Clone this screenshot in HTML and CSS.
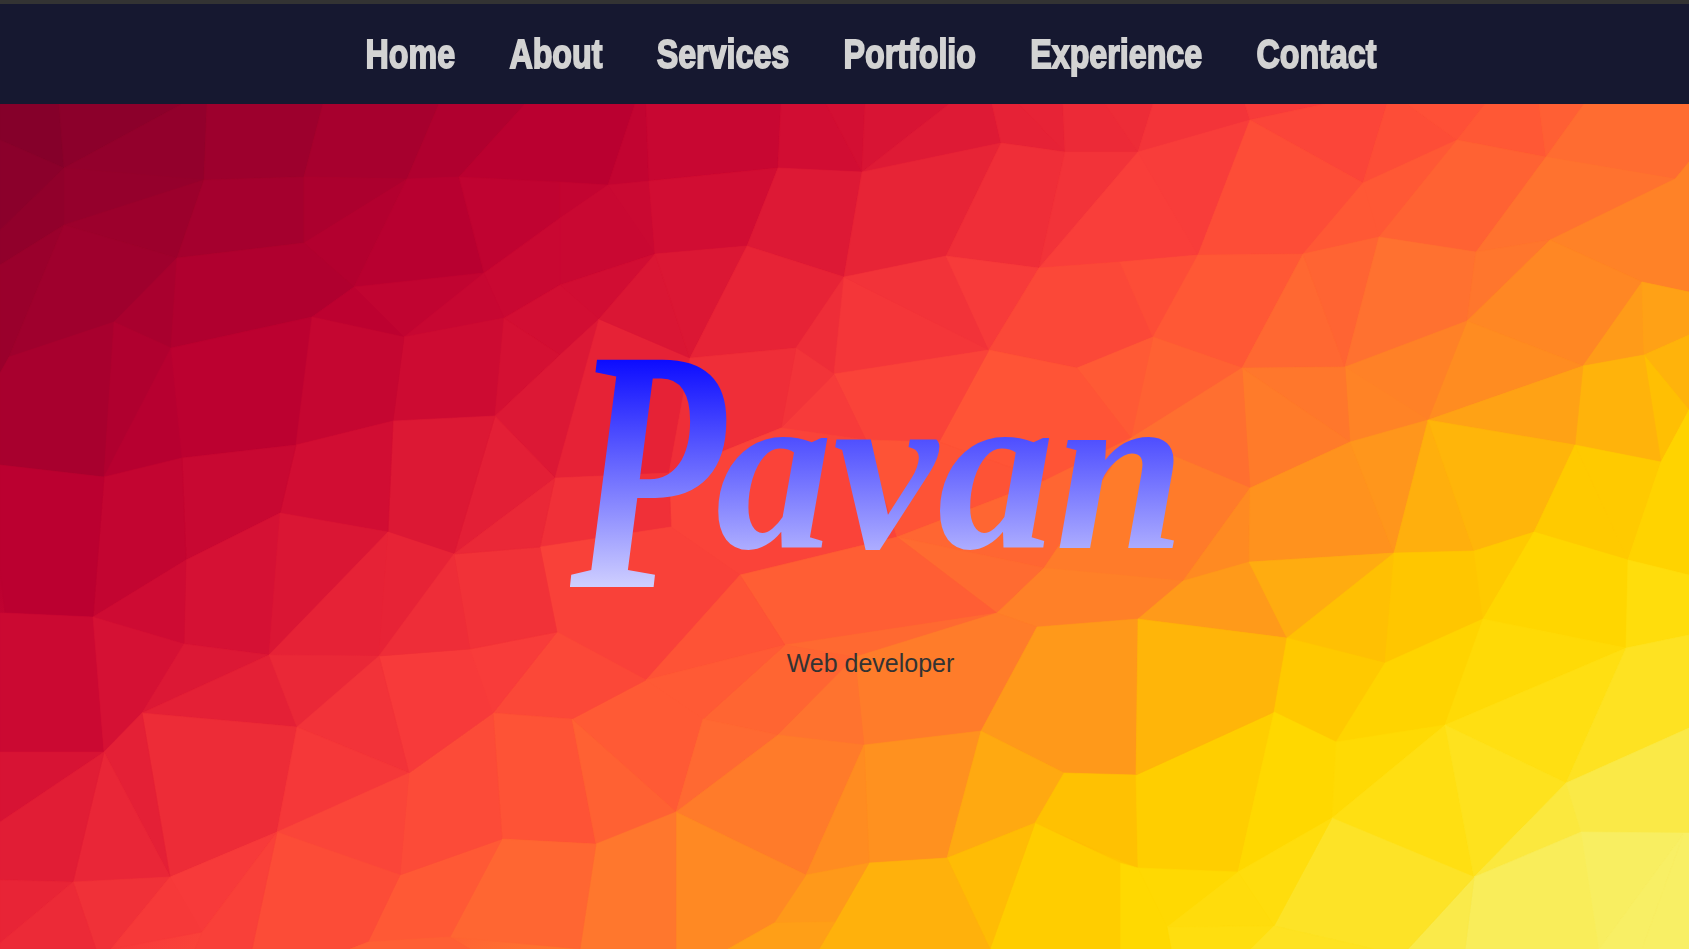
FILE: index.html
```html
<!DOCTYPE html>
<html lang="en">
<head>
    <meta charset="UTF-8">
    <meta name="viewport" content="width=device-width, initial-scale=1.0">
    <title>Pavan</title>
    <link rel="stylesheet" href="styles.css">
</head>
<body>
<header>
    <nav>
        <ul>
            <li><a href="#home">Home</a></li>
            <li><a href="#about">About</a></li>
            <li><a href="#services">Services</a></li>
            <li><a href="#portfolio">Portfolio</a></li>
            <li><a href="#experience">Experience</a></li>
            <li><a href="#contact">Contact</a></li>
        </ul>
    </nav>
</header>

<section class="hero" id="home">
    <svg class="mesh" id="mesh" viewBox="0 104 1689 845" preserveAspectRatio="none" aria-hidden="true"></svg>
    <h1 class="name"><span class="name-cap">P</span><span class="name-rest">avan</span></h1>
    <p class="role">Web developer</p>
</section>

<script src="script.js"></script>
</body>
</html>
```

FILE: styles.css
```css
body {
    font-family: 'Liberation Sans', Arial, sans-serif;
    margin: 0;
    padding: 0;
    height: 949px;
    overflow: hidden;
    background-color: #161830;
}

header {
    background-color: #161830;
    border-top: 4px solid #333;
    height: 100px;
    box-sizing: content-box;
    padding-left: 52px;
    display: flex;
    align-items: center;
    justify-content: center;
}

nav ul {
    list-style-type: none;
    margin: 0;
    padding: 0;
    display: flex;
    gap: 69px;
    transform: scaleX(0.786);
}

nav ul li a {
    font-family: Impact, 'Liberation Sans', sans-serif;
    font-weight: bold;
    font-size: 41px;
    line-height: 1;
    color: lightgray;
    text-decoration: none;
    -webkit-text-stroke: 1.8px lightgray;
}

.hero {
    position: relative;
    height: 845px;
    box-sizing: border-box;
    padding: 193px 0 0 52px;
    display: flex;
    flex-direction: column;
    align-items: center;
    background: linear-gradient(142deg, #7d0029 0%, #a0002d 12%, #bb0030 22%, #d10d33 30%, #e72336 37%, #f83c3a 44%, #ff5536 52%, #ff7030 58%, #ff8f20 66%, #ffab10 70%, #ffc400 75%, #ffd800 80%, #ffe015 87%, #f8ee60 100%);
}

.mesh {
    position: absolute;
    top: 0;
    left: 0;
    width: 100%;
    height: 100%;
}

.name {
    position: relative;
    margin: 0 0 0 38px;
    display: flex;
    align-items: flex-start;
    font-family: 'Liberation Serif', 'Times New Roman', serif;
    font-style: italic;
    font-weight: bold;
    line-height: 1;
}

.name-cap,
.name-rest {
    padding-right: 24px;
    -webkit-background-clip: text;
    background-clip: text;
    color: transparent;
}

.name-cap {
    font-size: 347px;
    margin-right: -90px;
    transform: scaleX(0.73);
    transform-origin: left top;
    background-image: linear-gradient(#0000ff 14%, #dcdcff 88%);
}

.name-rest {
    font-size: 235px;
    margin-top: 55px;
    background-image: linear-gradient(#0000ff -3%, #dcdcff 108%);
}

.role {
    position: relative;
    margin: 5px 0 0;
    font-size: 25px;
    line-height: 29px;
    color: #333;
}
```

FILE: script.js
```js
// colour ramp along the diagonal of the background
var stops = [
    [0, 120, 0, 40], [83, 125, 0, 41], [300, 160, 0, 45], [460, 187, 0, 48], [600, 209, 13, 51],
    [720, 231, 35, 54], [850, 248, 60, 58], [980, 255, 85, 54], [1100, 255, 112, 48],
    [1230, 255, 143, 32], [1300, 255, 171, 16], [1380, 255, 196, 0], [1480, 255, 216, 0],
    [1600, 255, 224, 21], [1760, 248, 238, 96], [1950, 248, 240, 110]
];

// facets, each one a flat list of x,y points
var faces = [
    [0,104,59,104,64,168,0,140], [59,104,182,104,64,168], [182,104,207,104,204,180,64,168],
    [207,104,323,104,304,177,204,180], [323,104,439,104,407,179,304,177], [439,104,525,104,459,177,407,179],
    [525,104,635,104,608,185,459,177], [635,104,646,104,649,181,608,185], [646,104,781,104,778,168,649,181],
    [781,104,826,104,862,172,778,168], [826,104,865,104,862,172], [865,104,949,104,862,172],
    [949,104,992,104,1001,143,862,172], [992,104,1019,104,1065,152,1001,143], [1019,104,1063,104,1065,152],
    [1063,104,1105,104,1138,152,1065,152], [1105,104,1153,104,1138,152], [1153,104,1245,104,1250,120,1138,152],
    [1245,104,1325,104,1250,120], [1325,104,1387,104,1363,183,1250,120], [1387,104,1407,104,1457,140,1363,183],
    [1407,104,1485,104,1457,140], [1485,104,1539,104,1546,157,1457,140], [1539,104,1584,104,1546,157],
    [1584,104,1689,104,1689,162,1675,179,1546,157],

    [0,140,64,168,0,230], [64,168,64,225,0,265,0,230], [64,168,204,180,64,225], [64,225,204,180,177,258],
    [204,180,304,177,304,243,177,258], [304,177,407,179,304,243], [304,243,407,179,354,287],
    [407,179,459,177,484,273,354,287], [459,177,560,182,560,220,484,273], [560,182,608,185,560,218],
    [608,185,649,181,655,254], [608,185,655,254,560,285,560,218], [484,273,560,218,560,285,504,318],
    [560,285,655,254,599,319], [504,318,560,285,599,319,560,355],
    [649,181,778,168,747,246,655,254], [778,168,862,172,844,277,747,246], [862,172,1001,143,946,256,844,277],
    [1001,143,1065,152,1039,268,946,256], [1065,152,1138,152,1120,173,1039,268],
    [1120,173,1138,152,1198,255,1120,262,1039,268], [1138,152,1250,120,1198,255],
    [1250,120,1363,183,1303,254,1198,255], [1363,183,1379,237,1303,254], [1363,183,1457,140,1379,237],
    [1457,140,1546,157,1476,252,1379,237], [1546,157,1675,179,1550,240,1476,252],
    [1675,179,1689,162,1689,292,1642,282,1550,240],

    [0,265,64,225,9,357,0,373], [64,225,177,258,114,322,9,357], [177,258,171,348,114,322],
    [177,258,304,243,354,287,312,317,171,348], [354,287,484,273,404,337], [354,287,404,337,312,317],
    [484,273,504,318,404,337], [404,337,504,318,495,416,393,421], [504,318,560,355,495,416],
    [9,357,114,322,104,477,0,465,0,373], [114,322,171,348,104,477], [171,348,182,458,104,477],
    [171,348,312,317,296,445,182,458], [312,317,404,337,393,421,296,445],
    [495,416,560,355,599,319,555,478], [599,319,690,358,669,473,555,478], [599,319,655,254,690,358],
    [655,254,747,246,690,358], [747,246,844,277,796,348,690,358], [844,277,834,374,796,348],
    [844,277,989,350,834,374], [844,277,946,256,989,350], [946,256,1039,268,989,350],
    [1039,268,1120,262,1153,337,1077,368,989,350], [1120,262,1198,255,1153,337],
    [1198,255,1303,254,1242,368,1153,337], [1303,254,1345,367,1242,368], [1303,254,1379,237,1345,367],
    [1379,237,1476,252,1467,321,1345,367], [1476,252,1550,240,1467,321], [1550,240,1642,282,1583,366,1467,321],
    [1642,282,1644,355,1583,366], [1642,282,1689,292,1689,335,1644,355], [1644,355,1689,335,1689,410],
    [1644,355,1689,410,1661,462], [1583,366,1644,355,1661,462,1575,445], [1467,321,1583,366,1428,420],
    [1583,366,1575,445,1428,420], [1345,367,1467,321,1428,420], [1345,367,1428,420,1350,442],
    [1242,368,1345,367,1350,442], [1153,337,1242,368,1131,438], [1242,368,1350,442,1250,488],
    [1242,368,1250,488,1131,438], [1077,368,1153,337,1131,438],

    [989,350,1077,368,1131,438,1046,480,939,442], [834,374,989,350,939,442,866,440], [834,374,866,440,781,428],
    [796,348,834,374,781,428], [690,358,796,348,781,428,669,473], [669,473,781,428,866,440,897,537,740,575,671,527],
    [555,478,669,473,671,527,540,547], [540,547,671,527,740,575,646,680,556,633],
    [866,440,939,442,1046,480,897,537], [897,537,1046,480,1131,438,1044,568], [897,537,1044,568,997,613],
    [897,537,997,613,785,645,740,575], [740,575,785,645,646,680], [1131,438,1250,488,1183,581,1044,568],
    [1250,488,1249,562,1183,581], [1250,488,1350,442,1394,553,1249,562], [1350,442,1428,420,1394,553],
    [1428,420,1474,551,1394,553], [1428,420,1575,445,1534,532,1474,551], [1575,445,1628,560,1534,532],
    [1575,445,1661,462,1628,560], [1661,462,1689,410,1689,575,1628,560],
    [1044,568,1183,581,1138,619,1037,627,997,613], [1183,581,1249,562,1287,638,1138,619],
    [1249,562,1394,553,1287,638], [1394,553,1385,663,1287,638], [1394,553,1474,551,1483,619,1385,663],
    [1474,551,1534,532,1483,619], [1534,532,1628,560,1626,648,1483,619], [1628,560,1689,575,1689,635,1626,648],

    [785,645,997,613,855,657], [855,657,997,613,1037,627,981,731,864,745], [785,645,855,657,778,735,703,719],
    [855,657,864,745,778,735], [1037,627,1138,619,1136,775,1064,773,981,731], [646,680,785,645,703,719],
    [572,719,646,680,703,719,676,812], [557,632,646,680,572,719,493,713], [493,713,572,719,596,844,502,839],
    [572,719,676,812,596,844], [703,719,778,735,676,812], [778,735,864,745,806,875,676,812],
    [864,745,981,731,947,858,869,863], [864,745,869,863,806,875], [981,731,1064,773,1035,823,947,858],
    [1064,773,1136,775,1138,868,1035,823], [1136,775,1274,712,1238,872,1138,868], [1138,619,1287,638,1274,712,1136,775],
    [1287,638,1385,663,1336,742,1274,712], [1274,712,1336,742,1332,818,1238,872], [1385,663,1483,619,1445,725,1336,742],
    [1483,619,1626,648,1445,725], [1626,648,1566,783,1445,725], [1626,648,1689,635,1689,728,1566,783],
    [1336,742,1445,725,1332,818], [1445,725,1474,877,1332,818], [1445,725,1566,783,1474,877],
    [1566,783,1581,832,1474,877], [1566,783,1689,728,1689,833,1581,832],
    [1474,877,1581,832,1599,949,1465,949], [1581,832,1684,833,1599,949], [1684,833,1642,949,1599,949],
    [1684,833,1689,833,1689,949,1642,949], [1474,877,1465,949,1408,949], [1332,818,1474,877,1408,949,1374,949,1274,926],
    [1238,872,1332,818,1274,926], [1138,868,1238,872,1167,927], [1238,872,1274,926,1167,927],
    [1167,927,1274,926,1251,949,1171,949], [1274,926,1374,949,1251,949], [1120,863,1138,868,1167,927,1171,949,1120,949],
    [1035,823,1120,863,1120,949,990,949], [947,858,1035,823,990,949], [869,863,947,858,990,949,819,949,835,922],
    [806,875,869,863,835,922,774,923], [676,812,806,875,774,923,728,949,676,949], [774,923,835,922,819,949,728,949],
    [596,844,676,812,676,949,580,949], [502,839,596,844,580,949,450,937], [400,875,502,839,450,937,368,942],

    [409,773,493,713,502,839,400,875], [379,656,470,649,493,713,409,773], [470,649,557,632,493,713],
    [454,554,540,547,557,632,470,649], [495,416,555,478,454,554], [393,421,495,416,454,554,388,532],
    [555,478,540,547,454,554], [296,445,393,421,388,532,280,513], [182,458,296,445,280,513,186,560],
    [104,477,182,458,186,560,93,617], [0,465,104,477,93,617,5,613,0,567], [186,560,280,513,269,655,184,644],
    [280,513,388,532,269,655], [388,532,379,656,269,655], [388,532,454,554,379,656], [454,554,470,649,379,656],
    [93,617,186,560,184,644], [5,613,93,617,104,752,0,752,0,613], [93,617,184,644,142,713,104,752],
    [184,644,269,655,142,713], [269,655,297,727,142,713], [269,655,379,656,297,727], [379,656,409,773,297,727],
    [142,713,297,727,277,832,170,877], [104,752,142,713,170,877], [104,752,170,877,73,882],
    [0,752,104,752,0,822], [0,822,104,752,73,882,0,880], [297,727,409,773,277,832], [277,832,409,773,400,875],
    [277,832,400,875,368,942,350,949,252,949], [170,877,277,832,202,932], [73,882,170,877,111,949,96,949],
    [170,877,202,932,111,949], [202,932,277,832,252,949,195,949], [0,880,73,882,0,943], [73,882,96,949,0,949,0,943],
    [368,942,450,937,470,949,350,949]
];

function rampColor(t) {
    for (var i = 1; i < stops.length; i++) {
        if (t <= stops[i][0]) {
            var a = stops[i - 1], b = stops[i];
            var k = Math.max(0, (t - a[0]) / (b[0] - a[0]));
            return "rgb(" + [1, 2, 3].map(function(c) {
                return Math.round(a[c] + (b[c] - a[c]) * k);
            }).join(",") + ")";
        }
    }
    return "rgb(248,240,110)";
}

var mesh = document.getElementById("mesh");

faces.forEach(function(face, index) {
    var x = 0, y = 0, n = face.length / 2, points = [];

    for (var i = 0; i < face.length; i += 2) {
        x += face[i];
        y += face[i + 1];
        points.push(face[i] + "," + face[i + 1]);
    }
    x = x / n;
    y = y / n;

    // the bands bend a little, flatter at the top right
    var t = 0.63 * x + 0.8 * y + 0.00012 * (x - 300) * (y - 500);
    // small shift so neighbouring facets read apart
    t += [-3, 2, -1, 3][index % 4];
    var color = rampColor(t);

    var poly = document.createElementNS("http://www.w3.org/2000/svg", "polygon");
    poly.setAttribute("points", points.join(" "));
    poly.setAttribute("fill", color);
    poly.setAttribute("stroke", color);
    poly.setAttribute("stroke-width", "0.6");
    mesh.appendChild(poly);
});
```
